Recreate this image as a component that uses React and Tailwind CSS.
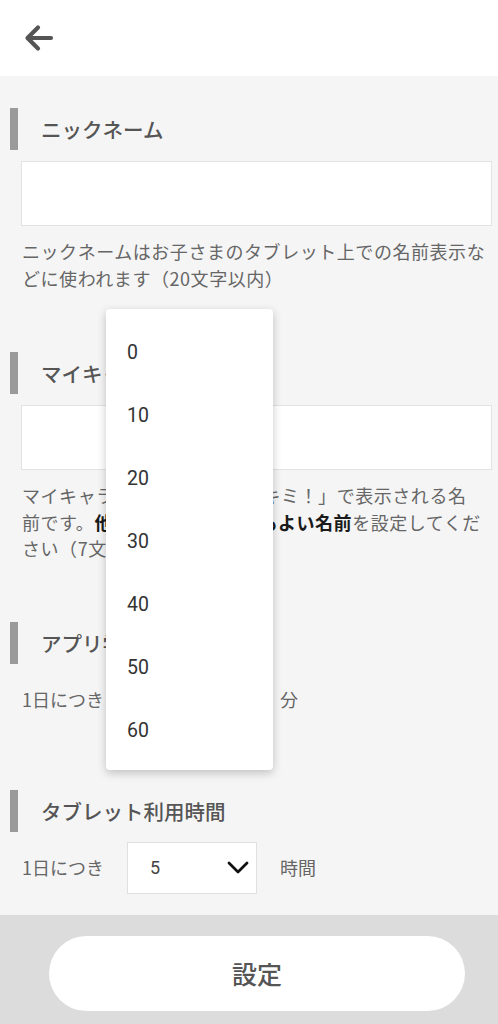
import React from "react";

function SectionTitle({ children, className = "" }) {
  return (
    <div className={`flex items-center h-[42px] ml-[10px] ${className}`}>
      <div className="w-[8px] h-full bg-[#9a9a9a]" />
      <div className="ml-[23px] text-[20.5px] leading-[42px] font-medium text-[#555555]">{children}</div>
    </div>
  );
}

function Chevron() {
  return (
    <svg width="22" height="14" viewBox="0 0 22 14" fill="none">
      <polyline points="2,2 11,11 20,2" stroke="#111" strokeWidth="2.8" strokeLinecap="round" strokeLinejoin="round" />
    </svg>
  );
}

function SelectRow({ value, unit, className = "" }) {
  return (
    <div className={`flex items-center h-[52px] ml-[22px] text-[18px] text-[#666666] ${className}`}>
      <span className="w-[83px] whitespace-nowrap">1日につき</span>
      <div className="ml-[22px] w-[130px] h-[52px] bg-white border border-[#e0e0e0] flex items-center justify-between pl-[22px] pr-[7px]">
        <span className="font-['Roboto',sans-serif] text-[18px] text-[#444]">{value}</span>
        <Chevron />
      </div>
      <span className="ml-[23px]">{unit}</span>
    </div>
  );
}

export default function App() {
  const options = ["0", "10", "20", "30", "40", "50", "60"];
  return (
    <div className="relative w-[498px] h-[1024px] overflow-hidden font-['Noto_Sans_CJK_JP','Noto_Sans',sans-serif]">
      <header className="h-[76px] bg-white flex items-center pl-[24px]">
        <svg width="30" height="28" viewBox="0 0 30 28" fill="none">
          <line x1="4" y1="14" x2="27" y2="14" stroke="#555" strokeWidth="4.2" strokeLinecap="round" />
          <polyline points="14,3.5 3.5,14 14,24.5" stroke="#555" strokeWidth="4.2" strokeLinecap="round" strokeLinejoin="round" />
        </svg>
      </header>

      <main className="h-[839px] bg-[#f5f5f5] pt-[32px]">
        <SectionTitle>ニックネーム</SectionTitle>
        <div className="mt-[11px] ml-[21px] mr-[6px] h-[65px] bg-white border border-[#e3e3e3]" />
        <p className="mt-[12px] ml-[22px] text-[18px] leading-[26.5px] tracking-[0.55px] text-[#666666] whitespace-nowrap">
          ニックネームはお子さまのタブレット上での名前表示な
          <br />
          どに使われます（20文字以内）
        </p>

        <SectionTitle className="mt-[61px]">マイキャラクター名</SectionTitle>
        <div className="mt-[11px] ml-[21px] mr-[6px] h-[65px] bg-white border border-[#e3e3e3]" />
        <p className="mt-[12px] ml-[22px] text-[18px] leading-[26.5px] tracking-[0.55px] text-[#666666] whitespace-nowrap">
          マイキャラクター名は「まなキミ！」で表示される名
          <br />
          前です。<b className="font-bold text-[#1a1a1a]">他のひとに見られてもよい名前</b>を設定してくだ
          <br />
          さい（7文字以内）
        </p>

        <SectionTitle className="mt-[60px]">アプリ学習時間</SectionTitle>
        <SelectRow value="30" unit="分" className="mt-[10px]" />

        <SectionTitle className="mt-[64px]">タブレット利用時間</SectionTitle>
        <SelectRow value="5" unit="時間" className="mt-[10px]" />
      </main>

      <footer className="h-[109px] bg-[#dcdcdc] pt-[21px] pl-[49px]">
        <button className="w-[416px] h-[75px] rounded-full bg-white flex items-center justify-center text-[25px] font-medium text-[#555555]">
          設定
        </button>
      </footer>

      <div className="absolute left-[106px] top-[309px] w-[167px] h-[461px] bg-white rounded-[4px] shadow-[0_3px_10px_rgba(0,0,0,0.22)] pt-[12px] pb-[8px]">
        {options.map((o) => (
          <div key={o} className="h-[63px] flex items-center pl-[21px] font-['Roboto',sans-serif] text-[19.5px] text-[#333333]">
            {o}
          </div>
        ))}
      </div>
    </div>
  );
}
